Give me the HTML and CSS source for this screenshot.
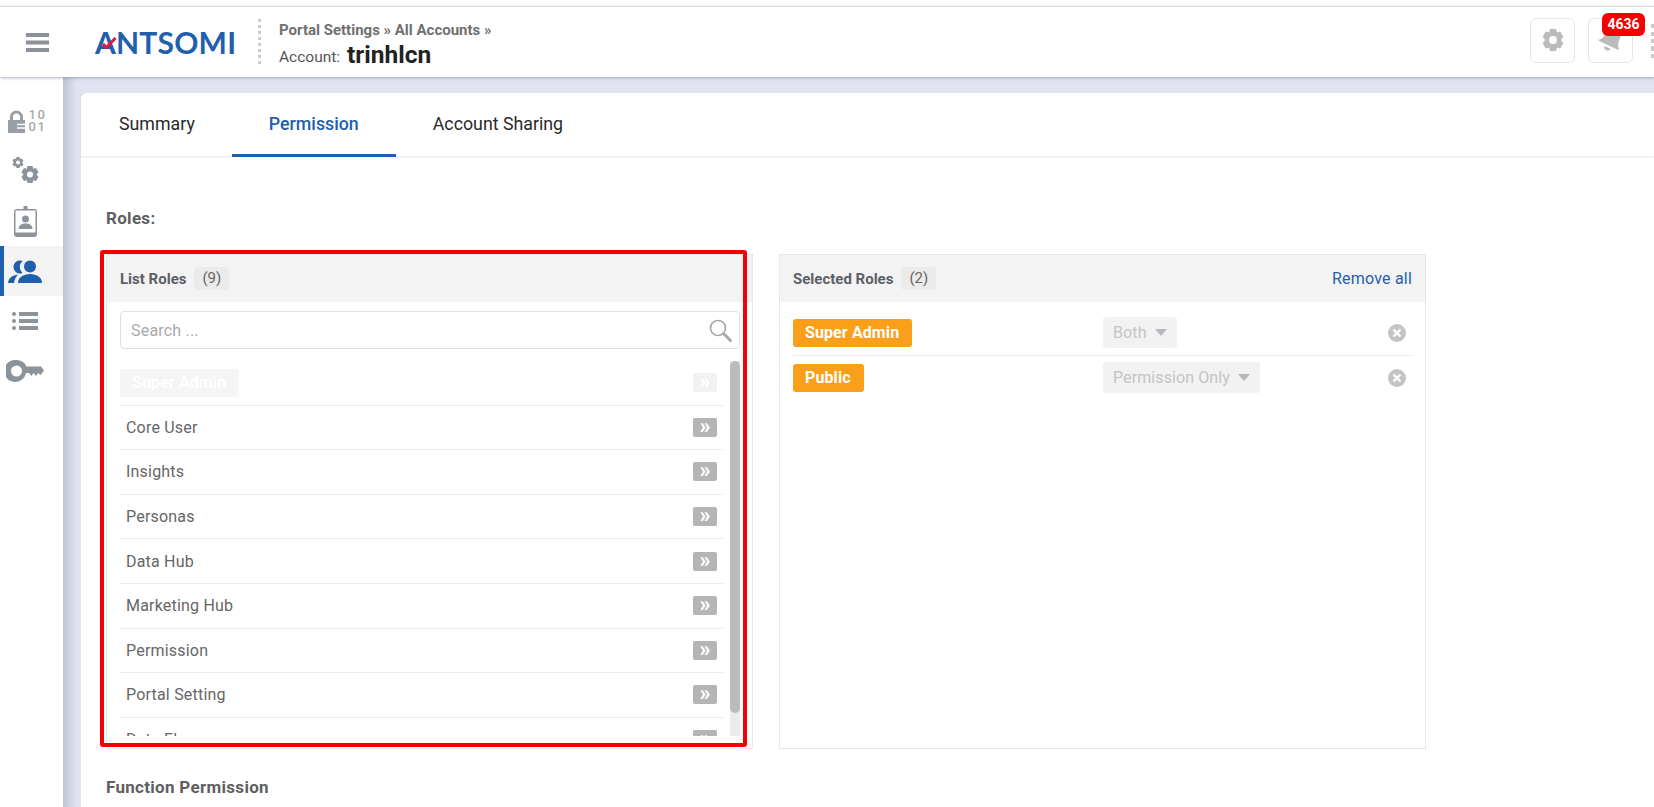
FILE: index.html
```html
<!DOCTYPE html>
<html lang="en">
<head>
  <meta charset="UTF-8" />
  <title>Account Permission</title>
  <link rel="stylesheet" href="styles.css">
</head>
<body>
  <header class="topbar">
    <button class="menu-btn" aria-label="Menu">
      <svg width="23" height="19" viewBox="0 0 23 19"><path d="M0 0h23v4H0zM0 7.500h23v4H0zM0 15h23v4H0z" fill="#8a9199"/></svg>
    </button>
    <div class="logo">
      <span>ANTSOMI</span>
      <svg class="logo-tick" width="15" height="13" viewBox="0 0 15 13"><path d="M1 8l3.500 3.500L13.500 2" fill="none" stroke="#e5173f" stroke-width="3"/></svg>
    </div>
    <div class="crumbs">
      <div class="crumb-path">Portal Settings » All Accounts »</div>
      <div class="crumb-account">Account: <strong>trinhlcn</strong></div>
    </div>
    <div class="top-actions">
      <button class="icon-btn" aria-label="Settings">
        <svg width="24" height="24" viewBox="0 0 24 24"><path fill="#bbb" fill-rule="evenodd" d="M9 1h6l1 3.600 3.300-1 3 5.200-2.400 3.200 2.400 3.200-3 5.200-3.300-1L15 23H9l-1-3.600-3.300 1-3-5.200L4.100 12 1.700 8.800l3-5.200 3.300 1zM12 8a4 4 0 1 0 0 8 4 4 0 0 0 0-8z"/></svg>
      </button>
      <button class="icon-btn" aria-label="Notifications">
        <svg class="bell" width="28" height="28" viewBox="0 0 26 26"><g fill="#bbb" transform="rotate(25 13 13)"><path d="M13 2c-4.500 0-7 3.400-7 7.500 0 4.300-1.500 6.200-3 7.500v1.500h20V17c-1.500-1.300-3-3.200-3-7.500C20 5.400 17.500 2 13 2z"/><path d="M10 20.500h6a3 3 0 0 1-6 0z"/></g></svg>
        <span class="notif-badge">4636</span>
      </button>
      <span class="top-dots"></span>
    </div>
  </header>

  <div class="layout">
    <nav class="sidebar">
      <a class="side-item side-lock">
        <svg width="17" height="23" viewBox="0 0 17 23"><path fill="#9a9fa6" d="M2 10V7a6.500 6.500 0 0 1 13 0v3h2v13H0V10zm3 0h7V7a3.500 3.500 0 0 0-7 0z"/><path stroke="#fff" stroke-width="1.500" d="M9 14.500h8M9 18h8"/></svg>
        <span class="bits">10<br>01</span>
      </a>
      <a class="side-item">
        <svg width="30" height="32" viewBox="0 0 30 30"><g fill="#8d939a"><path fill-rule="evenodd" d="M6.500 1h3l.5 2 2-.6 1.500 2.600-1.500 1.500 1.500 1.500L12 10.600 10 10l-.5 2h-3L6 10l-2 .6L2.500 8 4 6.500 2.500 5 4 2.400 6 3zM8 4.500a2 2 0 1 0 0 4 2 2 0 0 0 0-4z"/><path fill-rule="evenodd" d="M17.500 10h5l.7 2.800 2.800-.8 2.500 4.300-2 2.200 2 2.200-2.500 4.300-2.800-.8-.7 2.800h-5l-.7-2.800-2.800.8-2.500-4.300 2-2.200-2-2.200L14 12l2.800.8zM20 15.500a3 3 0 1 0 0 6 3 3 0 0 0 0-6z"/></g></svg>
      </a>
      <a class="side-item">
        <svg width="23" height="31" viewBox="0 0 23 31"><path fill="#8d939a" d="M9.500 0h4v3H20a3 3 0 0 1 3 3v22a3 3 0 0 1-3 3H3a3 3 0 0 1-3-3V6a3 3 0 0 1 3-3h6.500zM1.500 4.500V26.500h20V4.500z"/><circle cx="11.500" cy="13" r="3.500" fill="#8d939a"/><path fill="#8d939a" d="M4.500 23c0-3.500 3-5.500 7-5.500s7 2 7 5.500z"/></svg>
      </a>
      <a class="side-item active">
        <svg width="34" height="23" viewBox="0 0 34 23"><g fill="#1f5fad"><circle cx="22" cy="6.500" r="6"/><path d="M10 23c0-5.500 5-9 12-9s12 3.500 12 9z"/><path d="M14.500 1A6.500 6.500 0 1 0 14.500 13A8 8 0 0 1 14.500 1z"/><path d="M0 23c.5-4 3-7.500 10-8.500C8 16.500 6.500 19.500 6 23z"/></g></svg>
      </a>
      <a class="side-item">
        <svg width="26" height="20" viewBox="0 0 26 20"><g fill="#8d939a"><circle cx="2" cy="3" r="2"/><circle cx="2" cy="10" r="2"/><circle cx="2" cy="17" r="2"/><path d="M7 1h19v4H7zM7 8h19v4H7zM7 15h19v4H7z"/></g></svg>
      </a>
      <a class="side-item">
        <svg width="38" height="22" viewBox="0 0 38 22"><path fill="#8d939a" fill-rule="evenodd" d="M10.500 0a11 11 0 0 1 10 6.500H35l3 4-3.500 4.500-2.500-2-2 3-2.500-3-2 3-2.500-3h-3a11 11 0 1 1-9.500-13zm0 5.500a5.500 5.500 0 1 0 0 11 5.500 5.500 0 0 0 0-11z"/></svg>
      </a>
    </nav>

    <main class="content">
      <div class="card">
        <div class="tabs">
          <a class="tab">Summary</a>
          <a class="tab active">Permission</a>
          <a class="tab">Account Sharing</a>
        </div>
        <div class="tab-body">
          <div class="section-label">Roles:</div>
          <div class="role-panels">
            <section class="panel panel-marked">
              <div class="panel-head">
                <span class="panel-title">List Roles</span>
                <span class="count">(9)</span>
              </div>
              <div class="search">
                <span>Search ...</span>
                <svg width="23" height="23" viewBox="0 0 23 23"><circle cx="9" cy="9" r="7.500" fill="none" stroke="#aaa" stroke-width="1.700"/><path d="M14.500 14.500L21.500 21.500" stroke="#aaa" stroke-width="3" stroke-linecap="round"/></svg>
              </div>
              <div class="role-scroll">
                <ul class="role-list">
                  <li class="role-row"><span class="tag tag-off">Super Admin</span><span class="add-btn off">»</span></li>
                  <li class="role-row">Core User<span class="add-btn">»</span></li>
                  <li class="role-row">Insights<span class="add-btn">»</span></li>
                  <li class="role-row">Personas<span class="add-btn">»</span></li>
                  <li class="role-row">Data Hub<span class="add-btn">»</span></li>
                  <li class="role-row">Marketing Hub<span class="add-btn">»</span></li>
                  <li class="role-row">Permission<span class="add-btn">»</span></li>
                  <li class="role-row">Portal Setting<span class="add-btn">»</span></li>
                  <li class="role-row">Data Flows<span class="add-btn">»</span></li>
                </ul>
                <div class="scrollbar"><div class="scroll-thumb"></div></div>
              </div>
            </section>

            <section class="panel">
              <div class="panel-head">
                <span class="panel-title">Selected Roles</span>
                <span class="count">(2)</span>
                <a class="remove-all">Remove all</a>
              </div>
              <div class="selected-list">
                <div class="selected-row">
                  <span class="tag">Super Admin</span>
                  <span class="select-box">Both<i class="caret"></i></span>
                  <svg class="remove-x" width="18" height="18" viewBox="0 0 18 18"><circle cx="9" cy="9" r="9" fill="#c4c4c4"/><path d="M5.500 5.500l7 7M12.500 5.500l-7 7" stroke="#fff" stroke-width="2.400"/></svg>
                </div>
                <div class="selected-row">
                  <span class="tag">Public</span>
                  <span class="select-box">Permission Only<i class="caret"></i></span>
                  <svg class="remove-x" width="18" height="18" viewBox="0 0 18 18"><circle cx="9" cy="9" r="9" fill="#c4c4c4"/><path d="M5.500 5.500l7 7M12.500 5.500l-7 7" stroke="#fff" stroke-width="2.400"/></svg>
                </div>
              </div>
            </section>
          </div>
          <div class="section-label function-label">Function Permission</div>
        </div>
      </div>
    </main>
  </div>
</body>
</html>
```

FILE: styles.css
```css
:root {
  --blue: #1f5fad;
  --line: #e4e8ea;
  --head-bg: #f3f3f3;
  --text: #5f6368;
}

html, body {
  height: 807px;
  overflow: hidden;
}

body {
  margin: 0;
  font-family: Roboto, 'Liberation Sans', sans-serif;
  color: var(--text);
  background: #fff;
}

button {
  font-family: inherit;
  background: none;
  padding: 0;
  cursor: pointer;
}

/* top bar */
.topbar {
  display: flex;
  align-items: center;
  height: 70px;
  margin-top: 6px;
  border-top: 1px solid #dcdfe2;
  position: relative;
  z-index: 2;
  background: #fff;
  box-shadow: 0 1px 3px rgba(70, 90, 120, 0.45);
}

.menu-btn {
  border: none;
  margin-left: 26px;
  display: flex;
}

.logo {
  position: relative;
  margin-left: 46px;
  width: 138px;
  font-family: Lato, sans-serif;
  font-size: 30px;
  font-weight: 700;
  line-height: 30px;
  letter-spacing: 0.2px;
  color: var(--blue);
}

.logo-tick {
  position: absolute;
  left: 7px;
  top: 9px;
}

.crumbs {
  margin-left: 25px;
  padding-left: 21px;
  height: 47px;
  background: repeating-linear-gradient(to bottom, #ccc 0 3px, transparent 3px 6px) left top / 3px 100% no-repeat;
}

.crumb-path {
  font-size: 15px;
  font-weight: 700;
  color: #707070;
  line-height: 21px;
  margin-top: 1px;
}

.crumb-account {
  font-size: 15.5px;
  color: #555;
  line-height: 28px;
}

.crumb-account strong {
  font-size: 24.5px;
  color: #222;
  margin-left: 3px;
  vertical-align: -1px;
}

.top-actions {
  margin-left: auto;
  display: flex;
  align-items: center;
  gap: 13px;
  margin-top: -4px;
}

.icon-btn {
  position: relative;
  width: 45px;
  height: 45px;
  border: 1px solid #e2e6ea;
  border-radius: 6px;
  display: flex;
  align-items: center;
  justify-content: center;
}

.notif-badge {
  position: absolute;
  left: 13px;
  top: -6px;
  width: 43px;
  height: 23px;
  border-radius: 6px;
  background: #f70000;
  color: #fff;
  font-size: 14px;
  font-weight: 700;
  line-height: 23px;
  text-align: center;
}

.top-dots {
  width: 8px;
  height: 36px;
  margin-top: 4px;
  margin-left: 5px;
  margin-right: -5px;
  background: repeating-linear-gradient(to bottom, #ccc 0 4px, transparent 4px 7.500px);
}

/* page body */
.layout {
  display: flex;
  height: 730px;
}

.sidebar {
  width: 63px;
  flex-shrink: 0;
  padding-top: 19px;
  background: #fff;
  box-sizing: border-box;
}

.side-item {
  height: 50px;
  display: flex;
  align-items: center;
  justify-content: center;
  border-left: 4px solid transparent;
  padding-right: 17px;
}

.side-item.side-lock {
  padding-right: 13px;
}

.side-item.active {
  background: #f3f3f3;
  border-left-color: var(--blue);
}

.bits {
  font-size: 13px;
  font-weight: 500;
  line-height: 12px;
  letter-spacing: 1.5px;
  color: #a5a9ae;
  margin-left: 4px;
}

.content {
  flex: 1;
  min-width: 0;
  padding: 16px 0 0 18px;
  background: linear-gradient(to right, #bcc5d6, #e1e4f0 14px);
}

.card {
  background: #fff;
  border-radius: 6px 0 0 0;
  height: 100%;
}

.tabs {
  display: flex;
  height: 63px;
  border-bottom: 1px solid #eceef1;
  box-shadow: 0 1px 2px rgba(0, 0, 0, 0.05);
}

.tab {
  padding: 0 37px;
  font-size: 17.8px;
  line-height: 61px;
  color: #2a2a2a;
}

.tab:first-child {
  padding-left: 38px;
}

.tab.active {
  color: var(--blue);
  font-weight: 500;
  height: 61px;
  border-bottom: 3px solid var(--blue);
}

.tab-body {
  padding: 51px 0 0 25px;
}

.section-label {
  font-size: 17px;
  font-weight: 700;
  line-height: 20px;
  letter-spacing: 0.3px;
  color: #5f5f5f;
  margin-bottom: 26px;
}

.function-label {
  margin-top: 28px;
}

.role-panels {
  display: flex;
  gap: 26px;
}

.panel {
  position: relative;
  box-sizing: border-box;
  width: 647px;
  height: 495px;
  border: 1px solid var(--line);
}

/* red box drawn around the first panel */
.panel-marked::after {
  content: '';
  position: absolute;
  left: -7px;
  top: -5px;
  width: 639px;
  height: 489px;
  border: 4px solid #f40000;
  border-radius: 3px;
  pointer-events: none;
}

.panel-head {
  display: flex;
  align-items: center;
  height: 47px;
  padding: 0 13px;
  background: var(--head-bg);
}

.panel-title {
  font-size: 15px;
  font-weight: 700;
  color: #5c6066;
}

.count {
  margin-left: 8px;
  padding: 0 8px;
  height: 23px;
  line-height: 23px;
  border-radius: 4px;
  background: #ebebeb;
  font-size: 15px;
  color: #666;
}

.remove-all {
  margin-left: auto;
  font-size: 16px;
  letter-spacing: 0.2px;
  color: var(--blue);
}

.search {
  display: flex;
  align-items: center;
  justify-content: space-between;
  box-sizing: border-box;
  height: 38px;
  margin: 9px 12px 0 13px;
  padding: 0 7px 0 10px;
  border: 1px solid #e0e0e0;
  border-radius: 4px;
  font-size: 16px;
  letter-spacing: 0.2px;
  color: #aaa;
}

.role-scroll {
  display: flex;
  gap: 7px;
  height: 375px;
  margin: 12px 12px 0 13px;
}

.role-list {
  flex: 1;
  min-width: 0;
  list-style: none;
  margin: 0;
  padding: 0;
  overflow: hidden;
}

.scrollbar {
  width: 10px;
  flex-shrink: 0;
  background: #ebebeb;
}

.scroll-thumb {
  height: 352px;
  border-radius: 5px;
  background: #bbb;
}

.role-row {
  display: flex;
  align-items: center;
  justify-content: space-between;
  box-sizing: border-box;
  height: 44.6px;
  padding: 0 6px;
  border-bottom: 1px solid #e9ebec;
  font-size: 16px;
  letter-spacing: 0.2px;
  color: #666;
}

.role-row:first-child {
  padding-left: 0;
}

.add-btn {
  width: 24px;
  height: 19px;
  border-radius: 2px;
  background: #b5b5b5;
  color: #fff;
  font-size: 22px;
  font-weight: 700;
  line-height: 15px;
  text-align: center;
}

.add-btn.off {
  background: #f2f2f2;
}

.tag {
  display: inline-block;
  padding: 0 13px 0 12px;
  height: 28px;
  line-height: 28px;
  border-radius: 3px;
  background: #fb9f1a;
  color: #fff;
  font-size: 16px;
  font-weight: 700;
  letter-spacing: 0.1px;
}

.tag-off {
  background: #f5f5f5;
}

.selected-list {
  margin: 0 13px;
  padding-top: 8px;
}

.selected-row {
  display: flex;
  align-items: center;
  height: 45px;
  border-bottom: 1px solid #e9ebec;
  position: relative;
}

.selected-row:last-child {
  height: 43px;
  border-bottom: none;
}

.selected-row .tag {
  flex-shrink: 0;
}

.select-box {
  position: absolute;
  left: 310px;
  height: 31px;
  line-height: 31px;
  padding: 0 10px;
  border-radius: 3px;
  background: #f2f2f2;
  color: #c4c4c4;
  font-size: 16px;
  letter-spacing: 0.1px;
}

.caret {
  display: inline-block;
  margin-left: 8px;
  vertical-align: 2px;
  border-left: 6px solid transparent;
  border-right: 6px solid transparent;
  border-top: 7px solid #b5b9bd;
}

.remove-x {
  margin-left: auto;
  margin-right: 6px;
}
```
